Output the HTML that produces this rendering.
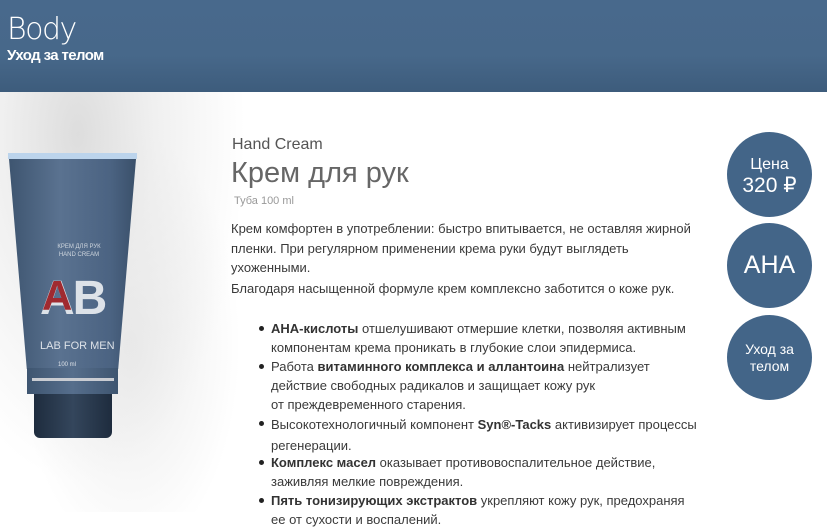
<!DOCTYPE html>
<html><head><meta charset="utf-8"><style>
*{margin:0;padding:0;box-sizing:border-box}
body{width:827px;height:531px;overflow:hidden;background:#fff;font-family:"Liberation Sans","DejaVu Sans",sans-serif;position:relative;color:#3a3a3a}
.hdr{position:absolute;left:0;top:0;width:827px;height:92px;background:linear-gradient(180deg,#48698c 0%,#47688a 60%,#3d5c7c 100%)}
.hdr .b{position:absolute;left:7px;top:12px;font-size:30px;color:#fff;font-family:"DejaVu Sans ExtraLight","DejaVu Sans Light","Liberation Sans Narrow",sans-serif;font-weight:200;letter-spacing:-1.5px}
.hdr .s{position:absolute;left:7px;top:47px;font-size:15px;color:#fff;font-weight:bold;letter-spacing:-0.6px}
.splash{position:absolute;left:0;top:92px;width:260px;height:420px;background:radial-gradient(ellipse at 30% 10%,#ddd 0%,rgba(230,230,230,.6) 30%,rgba(255,255,255,0) 65%),radial-gradient(ellipse at 50% 60%,rgba(220,220,220,.6) 0%,rgba(255,255,255,0) 60%)}
.t{position:absolute;font-size:13px;color:#3a3a3a}
.circ{position:absolute;left:727px;width:85px;height:85px;border-radius:50%;background:#436588;color:#fff;text-align:center;display:flex;align-items:center;justify-content:center;flex-direction:column}
ul{list-style:none}
li{position:absolute;left:271px;font-size:13px;line-height:19px;width:430px}
li:before{content:"";position:absolute;left:-12px;top:7px;width:5px;height:5px;border-radius:50%;background:#222}
b{color:#333}
</style></head><body>
<div class="hdr"><div class="b">Body</div><div class="s">Уход за телом</div></div>
<div class="splash"></div>
<!-- tube -->
<div style="position:absolute;left:8px;top:153px;width:129px;height:6px;background:#bcd4ec"></div>
<div style="position:absolute;left:9px;top:159px;width:127px;height:210px;background:linear-gradient(90deg,#3e5570,#5a7290 40%,#4b6382 80%,#3a506a);clip-path:polygon(0 0,100% 0,86% 100%,14% 100%)"></div>
<div style="position:absolute;left:27px;top:368px;width:91px;height:26px;background:linear-gradient(90deg,#3e5570,#566e8c,#3e5570)"></div>
<div style="position:absolute;left:32px;top:378px;width:82px;height:3px;background:#c9ccd2"></div>
<div style="position:absolute;left:34px;top:394px;width:78px;height:44px;background:linear-gradient(90deg,#1e2c3e,#34465c,#1e2c3e);border-radius:0 0 6px 6px"></div>
<div style="position:absolute;left:44px;top:243px;font-size:6px;color:#cfd6de;width:70px;text-align:center;line-height:8px">КРЕМ ДЛЯ РУК<br>HAND CREAM</div>
<div style="position:absolute;left:40px;top:276px;font-size:48px;font-weight:bold;color:#dde2e8;line-height:46px;letter-spacing:-2px">AB</div>
<div style="position:absolute;left:42px;top:273px;font-size:42px;font-weight:bold;color:#a02a30;line-height:46px">A</div>
<div style="position:absolute;left:40px;top:340px;font-size:11px;color:#dde2e8">LAB FOR MEN</div>
<div style="position:absolute;left:58px;top:362px;font-size:6px;color:#dde2e8">100 ml</div>

<div class="t" style="left:232px;top:136px;font-size:16px;color:#555">Hand Cream</div>
<div class="t" style="left:231px;top:157px;font-size:29px;color:#666">Крем для рук</div>
<div class="t" style="left:234px;top:195px;font-size:11px;color:#999">Туба 100 ml</div>
<div class="t" style="left:231px;top:219px;line-height:19.5px;width:470px">Крем комфортен в употреблении: быстро впитывается, не оставляя жирной пленки. При регулярном применении крема руки будут выглядеть ухоженными.</div>
<div class="t" style="left:231px;top:281px">Благодаря насыщенной формуле крем комплексно заботится о коже рук.</div>
<ul>
<li style="top:319px"><b>АНА-кислоты</b> отшелушивают отмершие клетки, позволяя активным<br>компонентам крема проникать в глубокие слои эпидермиса.</li>
<li style="top:357px">Работа <b>витаминного комплекса и аллантоина</b> нейтрализует<br>действие свободных радикалов и защищает кожу рук<br>от преждевременного старения.</li>
<li style="top:414px;line-height:21px">Высокотехнологичный компонент <b>Syn®-Tacks</b> активизирует процессы<br>регенерации.</li>
<li style="top:453px"><b>Комплекс масел</b> оказывает противовоспалительное действие,<br>заживляя мелкие повреждения.</li>
<li style="top:491px"><b>Пять тонизирующих экстрактов</b> укрепляют кожу рук, предохраняя<br>ее от сухости и воспалений.</li>
</ul>
<div class="circ" style="top:132px;font-size:16px;line-height:21px"><div>Цена</div><div style="font-size:21px">320 ₽</div></div>
<div class="circ" style="top:223px;font-size:25px">АНА</div>
<div class="circ" style="top:315px;font-size:14px;line-height:17px"><div>Уход за<br>телом</div></div>
</body></html>
